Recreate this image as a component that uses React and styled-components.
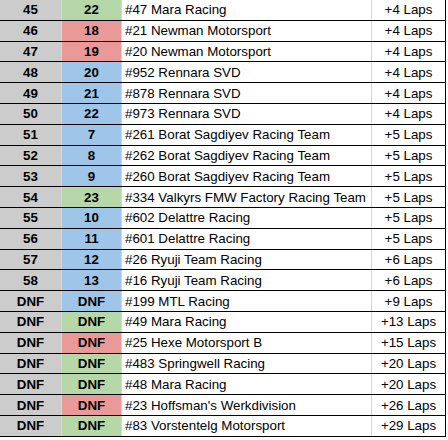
import React from "react";
import styled, { createGlobalStyle } from "styled-components";

const GlobalStyle = createGlobalStyle`
  html, body {
    margin: 0;
    padding: 0;
    background: #ffffff;
  }
  body {
    font-family: "Liberation Sans", Arial, sans-serif;
    font-size: 13.33px;
    color: #000000;
  }
`;

const fills = {
  g: "#b6d7a8",
  r: "#ea9999",
  b: "#9fc5e8",
};

const Sheet = styled.div`
  display: flex;
  flex-direction: column;
  width: 446px;
`;

const Row = styled.div`
  display: grid;
  grid-template-columns: 62px 60px 250px 74px;
  height: 20.8px;
  box-sizing: border-box;
  border-bottom: 1px solid #000000;
`;

const Cell = styled.div`
  display: flex;
  align-items: center;
  box-sizing: border-box;
  border-right: 1px solid #d6d6d6;
  white-space: nowrap;
  overflow: hidden;
`;

const PosCell = styled(Cell)`
  justify-content: center;
  font-weight: bold;
  background: #cccccc;
`;

const GridCell = styled(Cell)`
  justify-content: center;
  font-weight: bold;
  background: ${(p) => fills[p.$fill]};
`;

const TeamCell = styled(Cell)`
  padding-left: 3px;
`;

const GapCell = styled(Cell)`
  justify-content: center;
  border-right: 1px solid #000000;
`;

const rows = [
  ["45", "22", "g", "#47 Mara Racing", "+4 Laps"],
  ["46", "18", "r", "#21 Newman Motorsport", "+4 Laps"],
  ["47", "19", "r", "#20 Newman Motorsport", "+4 Laps"],
  ["48", "20", "b", "#952 Rennara SVD", "+4 Laps"],
  ["49", "21", "b", "#878 Rennara SVD", "+4 Laps"],
  ["50", "22", "b", "#973 Rennara SVD", "+4 Laps"],
  ["51", "7", "b", "#261 Borat Sagdiyev Racing Team", "+5 Laps"],
  ["52", "8", "b", "#262 Borat Sagdiyev Racing Team", "+5 Laps"],
  ["53", "9", "b", "#260 Borat Sagdiyev Racing Team", "+5 Laps"],
  ["54", "23", "g", "#334 Valkyrs FMW Factory Racing Team", "+5 Laps"],
  ["55", "10", "b", "#602 Delattre Racing", "+5 Laps"],
  ["56", "11", "b", "#601 Delattre Racing", "+5 Laps"],
  ["57", "12", "b", "#26 Ryuji Team Racing", "+6 Laps"],
  ["58", "13", "b", "#16 Ryuji Team Racing", "+6 Laps"],
  ["DNF", "DNF", "b", "#199 MTL Racing", "+9 Laps"],
  ["DNF", "DNF", "g", "#49 Mara Racing", "+13 Laps"],
  ["DNF", "DNF", "r", "#25 Hexe Motorsport B", "+15 Laps"],
  ["DNF", "DNF", "g", "#483 Springwell Racing", "+20 Laps"],
  ["DNF", "DNF", "g", "#48 Mara Racing", "+20 Laps"],
  ["DNF", "DNF", "r", "#23 Hoffsman's Werkdivision", "+26 Laps"],
  ["DNF", "DNF", "g", "#83 Vorstentelg Motorsport", "+29 Laps"],
];

const App = () => {
  return (
    <>
      <GlobalStyle />
      <Sheet>
        {rows.map(([pos, grid, fill, team, gap], i) => (
          <Row key={i}>
            <PosCell>{pos}</PosCell>
            <GridCell $fill={fill}>{grid}</GridCell>
            <TeamCell>{team}</TeamCell>
            <GapCell>{gap}</GapCell>
          </Row>
        ))}
      </Sheet>
    </>
  );
};

export default App;
